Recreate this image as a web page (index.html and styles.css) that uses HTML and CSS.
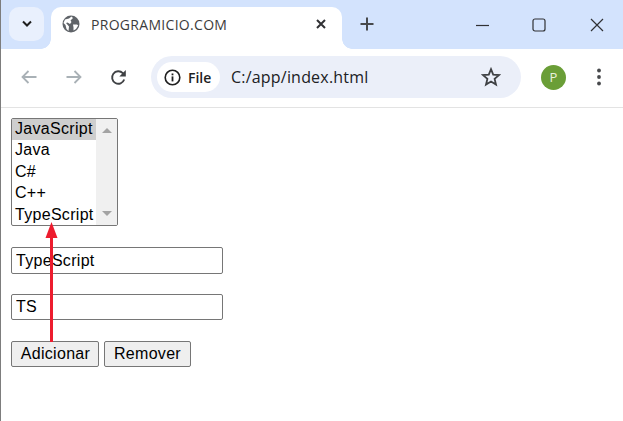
FILE: index.html
```html
<!DOCTYPE html>
<html lang="pt">
<head>
<meta charset="utf-8">
<title>PROGRAMICIO.COM</title>
<link rel="stylesheet" href="styles.css">
</head>
<body>
<div class="window">
  <header class="tabbar">
    <button class="tab-search" aria-label="Tabs">
      <svg width="12" height="8" viewBox="0 0 12 8"><path d="M2 1.5 6 5.5 10 1.5" fill="none" stroke="#1f1f1f" stroke-width="2"/></svg>
    </button>
    <div class="tab">
      <svg class="globe" width="18" height="18" viewBox="0 0 18 18"><circle cx="9" cy="9" r="8.5" fill="#5f6368"/><path d="M3 4.5 7 3.5 9.5 1.5 11 3 8.500 5.500 9.500 7 8 9 5.500 7.500 4 8 7 11.500 6.500 16 4.500 14 3.500 10 1.500 8ZM11 9.500 15 9.500 16.200 10.500 14 14 11.500 15.500 11.500 12.500Z" fill="#fff"/></svg>
      <span class="tab-title">PROGRAMICIO.COM</span>
      <svg class="tab-close" width="10" height="10" viewBox="0 0 10 10"><path d="M1 1 9 9M9 1 1 9" stroke="#303134" stroke-width="2"/></svg>
    </div>
    <svg class="new-tab" width="14" height="14" viewBox="0 0 14 14"><path d="M7 0.500V13.500M0.500 7H13.500" stroke="#47494c" stroke-width="2"/></svg>
    <div class="win-controls">
      <svg width="13" height="13" viewBox="0 0 13 13"><path d="M0 6.500H13" stroke="#303134" stroke-width="1.200"/></svg>
      <svg width="14" height="14" viewBox="0 0 14 14"><rect x="1" y="1" width="12" height="12" rx="2" fill="none" stroke="#303134" stroke-width="1.200"/></svg>
      <svg width="14" height="14" viewBox="0 0 14 14"><path d="M1 1 13 13M13 1 1 13" stroke="#303134" stroke-width="1.200"/></svg>
    </div>
  </header>
  <nav class="toolbar">
    <svg class="nav-icon" width="16" height="14" viewBox="0 0 16 14"><path d="M15.500 7H1.500M7.500 1 1.500 7 7.500 13" fill="none" stroke="#a9b1b6" stroke-width="1.800"/></svg>
    <svg class="nav-icon forward" width="16" height="14" viewBox="0 0 16 14"><path d="M0.500 7H14.500M8.500 1 14.500 7 8.500 13" fill="none" stroke="#a9b1b6" stroke-width="1.800"/></svg>
    <svg class="nav-icon reload" width="17" height="17" viewBox="0 0 17 17"><path d="M14.200 10.500A6.200 6.200 0 1 1 12.800 4.200L14.500 6" fill="none" stroke="#3f4144" stroke-width="1.900"/><path d="M15.800 1V7.500H9.300Z" fill="#3f4144"/></svg>
    <div class="omnibox">
      <div class="chip">
        <svg width="17" height="17" viewBox="0 0 17 17"><circle cx="8.500" cy="8.500" r="7.300" fill="none" stroke="#1f1f1f" stroke-width="1.600"/><rect x="7.600" y="7.400" width="1.800" height="5" fill="#1f1f1f"/><rect x="7.600" y="4.500" width="1.800" height="1.800" fill="#1f1f1f"/></svg>
        <span>File</span>
      </div>
      <span class="url">C:/app/index.html</span>
      <svg class="star" width="20" height="20" viewBox="0 0 20 20"><path d="M10 2.200 12.200 7.600 18 8.100 13.600 11.900 15 17.600 10 14.600 5 17.600 6.400 11.900 2 8.100 7.800 7.600Z" fill="none" stroke="#3f4144" stroke-width="1.800"/></svg>
    </div>
    <div class="avatar">P</div>
    <svg class="menu" width="4" height="18" viewBox="0 0 4 18"><circle cx="2" cy="2.500" r="1.900" fill="#47494c"/><circle cx="2" cy="9" r="1.900" fill="#47494c"/><circle cx="2" cy="15.500" r="1.900" fill="#47494c"/></svg>
  </nav>
  <main class="page">
    <div class="listbox">
      <ul class="options">
        <li class="selected">JavaScript</li>
        <li>Java</li>
        <li>C#</li>
        <li>C++</li>
        <li>TypeScript</li>
      </ul>
      <div class="scrollbar">
        <svg width="10" height="5" viewBox="0 0 10 5"><path d="M5 0 10 5H0Z" fill="#a3a3a3"/></svg>
        <svg width="10" height="5" viewBox="0 0 10 5"><path d="M0 0H10L5 5Z" fill="#a3a3a3"/></svg>
      </div>
    </div>
    <input class="field" type="text" value="TypeScript">
    <input class="field" type="text" value="TS">
    <div class="actions">
      <button class="btn">Adicionar</button>
      <button class="btn">Remover</button>
    </div>
    <svg class="arrow" width="15" height="122" viewBox="0 0 15 122"><path d="M7.500 12V120" stroke="#ed1c2e" stroke-width="3"/><path d="M7.500 0 13.500 16H1.500Z" fill="#ed1c2e"/></svg>
  </main>
</div>
</body>
</html>
```
FILE: styles.css
```css
* { box-sizing: border-box; }
html, body { margin: 0; height: 100%; background: #fff; overflow: hidden; }
.window {
  height: 421px;
  display: flex;
  flex-direction: column;
  border-left: 1px solid #7d7d7d;
  font-family: "Liberation Sans", Arial, sans-serif;
}
.tabbar {
  height: 49px;
  flex: none;
  background: #d3e3fd;
  display: flex;
  align-items: flex-start;
}
.tab-search {
  width: 35px;
  height: 34px;
  margin: 7px 0 0 8px;
  padding: 0;
  border: 0;
  border-radius: 10px;
  background: #e9f0fd;
  display: flex;
  align-items: center;
  justify-content: center;
}
.tab {
  width: 291px;
  height: 42px;
  margin: 7px 0 0 7px;
  background: #fff;
  border-radius: 10px 10px 0 0;
  display: flex;
  align-items: center;
  padding: 0 16px 8px 11px;
  position: relative;
}
.tab::before, .tab::after {
  content: "";
  position: absolute;
  bottom: 0;
  width: 10px;
  height: 10px;
}
.tab::before { left: -10px; background: radial-gradient(circle at 0 0, transparent 9.500px, #fff 10px); }
.tab::after { right: -10px; background: radial-gradient(circle at 100% 0, transparent 9.500px, #fff 10px); }
.tab-title {
  margin-left: 11px;
  flex: 1;
  font: 14px "Open Sans", sans-serif;
  letter-spacing: 0.3px;
  color: #3c3c3c;
}
.new-tab { margin: 17px 0 0 18px; }
.win-controls {
  margin: 18px 0 0 auto;
  padding-right: 19px;
  display: flex;
  align-items: center;
  gap: 44px;
}
.win-controls svg:first-child { margin-right: -1px; }
.toolbar {
  height: 59px;
  flex: none;
  background: #fff;
  border-bottom: 1px solid #e3e3e3;
  border-radius: 8px 8px 0 0;
  display: flex;
  align-items: center;
  padding: 0 0 2px 20px;
  position: relative;
}
.forward { margin-left: 29px; }
.reload { margin-left: 28px; }
.omnibox {
  width: 370px;
  height: 42px;
  margin-left: 24px;
  border-radius: 21px;
  background: #ebeff9;
  display: flex;
  align-items: center;
  padding: 0 20px 0 6px;
}
.chip {
  width: 63px;
  height: 30px;
  border-radius: 15px;
  background: #fff;
  display: flex;
  align-items: center;
  gap: 7px;
  padding-left: 7px;
  font: 600 14px "Open Sans", sans-serif;
  color: #1f1f1f;
}
.url {
  margin-left: 11px;
  flex: 1;
  font: 16px "Open Sans", sans-serif;
  letter-spacing: 0.2px;
  color: #202124;
}
.avatar {
  width: 25px;
  height: 25px;
  margin-left: 20px;
  border-radius: 50%;
  background: #6a9e37;
  color: #e8f0dd;
  font: 13px "Open Sans", sans-serif;
  display: flex;
  align-items: center;
  justify-content: center;
}
.menu { margin-left: 31px; }
.page {
  flex: 1;
  position: relative;
  padding: 10px 0 0 10px;
  font-size: 16px;
  letter-spacing: 0.3px;
  color: #000;
}
.listbox {
  width: 107px;
  height: 108px;
  border: 1px solid #767676;
  border-radius: 2px;
  display: flex;
  overflow: hidden;
}
.options {
  list-style: none;
  margin: 0;
  padding: 0;
  flex: 1;
  line-height: 19.400px;
}
.options li { padding: 0 0 2px 3px; white-space: nowrap; }
.options .selected { background: #cecece; }
.scrollbar {
  width: 21px;
  flex: none;
  background: #f0f0f0;
  display: flex;
  flex-direction: column;
  justify-content: space-between;
  align-items: center;
  padding: 9px 0;
}
.field {
  display: block;
  width: 212px;
  height: 27px;
  margin: 21px 0 0;
  padding: 0 4px;
  border: 1px solid #767676;
  border-radius: 2px;
  font: 16px "Liberation Sans", Arial, sans-serif;
  letter-spacing: 0.3px;
  color: #000;
}
.field + .field { height: 26px; margin-top: 20px; padding-bottom: 1px; }
.actions { display: flex; gap: 5px; margin-top: 21px; }
.btn {
  width: 88px;
  height: 26px;
  padding: 0 0 1px 1px;
  border: 1px solid #767676;
  border-radius: 2px;
  background: #efefef;
  font: 16px "Liberation Sans", Arial, sans-serif;
  letter-spacing: 0.3px;
  color: #000;
}
.btn + .btn { width: 87px; padding-left: 0; }
.arrow { position: absolute; left: 43px; top: 114px; }
```
